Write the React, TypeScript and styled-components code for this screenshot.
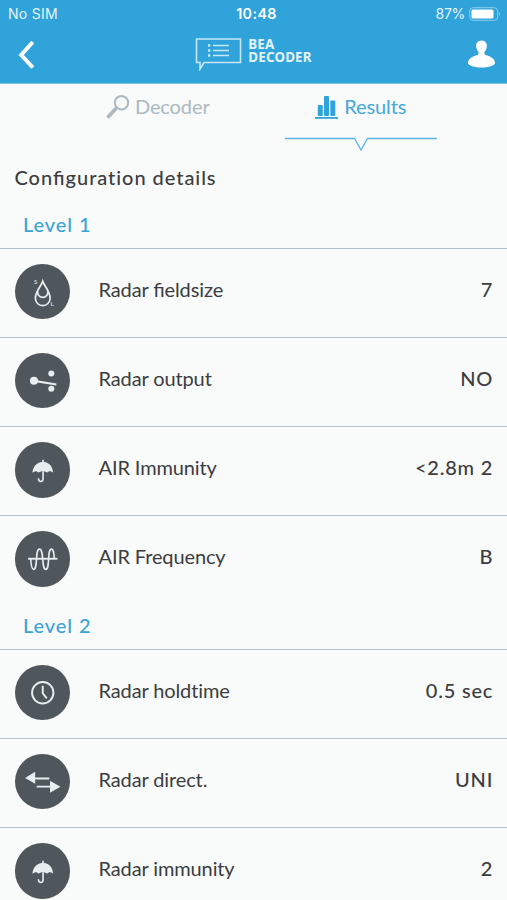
import React from 'react';
import styled, { createGlobalStyle } from 'styled-components';

const GlobalStyle = createGlobalStyle`
  * { box-sizing: border-box; }
  body { margin: 0; background: #f9fafa; overflow: hidden; }
`;

const BLUE = '#2fa3da';

const Screen = styled.main`
  width: 507px;
  height: 900px;
  overflow: hidden;
  background: #f9fafa;
  color: #3c3d3f;
  font-family: Lato, 'Liberation Sans', sans-serif;
  font-feature-settings: 'liga' 0;
`;

const Ligature = styled.span`
  font-feature-settings: 'liga' 1;
`;

const Header = styled.header`
  height: 84px;
  background: ${BLUE};
  color: #fff;
  border-bottom: 1px solid #7fc6e8;
`;

const StatusBar = styled.div`
  display: grid;
  grid-template-columns: 1fr auto 1fr;
  align-items: center;
  height: 28px;
  padding: 0 6px 0 8px;
  font: 400 14px/28px Inter, sans-serif;
  letter-spacing: 0.3px;
  color: #e4f4fc;
`;

const Clock = styled.span`
  font-weight: 600;
  font-size: 14.3px;
  letter-spacing: 0.4px;
  margin-left: 4px;
  color: #fff;
`;

const Battery = styled.span`
  display: flex;
  justify-content: flex-end;
  align-items: center;
  gap: 4px;
  letter-spacing: -0.3px;
`;

const NavBar = styled.div`
  display: grid;
  grid-template-columns: 1fr auto 1fr;
  height: 55px;
  padding: 0 11px 0 18px;
`;

const IconButton = styled.button<{ $end?: boolean }>`
  justify-self: ${(p) => (p.$end ? 'end' : 'start')};
  align-self: start;
  display: flex;
  margin-top: 11px;
  padding: 0;
  border: 0;
  background: none;
  color: inherit;
`;

const Brand = styled.div`
  display: flex;
  align-items: flex-start;
  gap: 6px;
  padding-top: 9px;
  margin-left: -7px;
`;

const BrandName = styled.div`
  display: flex;
  flex-direction: column;
  font: 700 13.4px/13.5px 'Noto Sans', sans-serif;
  letter-spacing: 0.15px;
  padding-top: 0.5px;
  color: #e4f4fc;
`;

const Tabs = styled.nav`
  display: grid;
  grid-template-columns: 1fr 1fr;
  height: 69px;
`;

const Tab = styled.div<{ $active?: boolean }>`
  display: flex;
  flex-direction: column;
  align-items: center;
  padding-left: ${(p) => (p.$active ? '0' : '62px')};
  padding-right: ${(p) => (p.$active ? '39px' : '0')};
  color: ${(p) => (p.$active ? '#43a8d9' : '#adb9c1')};
`;

const TabLabel = styled.div`
  display: flex;
  align-items: center;
  gap: 5px;
  height: 46px;
  font-size: 20px;
  line-height: 24px;
  letter-spacing: -0.1px;
`;

const TabText = styled.span`
  margin-top: -2px;
`;

const Title = styled.h1`
  height: 50.6px;
  margin: 0;
  padding-left: 14.5px;
  font-size: 20px;
  font-weight: 500;
  line-height: 48px;
  letter-spacing: 0.95px;
`;

const LevelTitle = styled.h2`
  height: 44px;
  margin: 0;
  padding-left: 23px;
  font-size: 20px;
  font-weight: 500;
  line-height: 41px;
  letter-spacing: 0.9px;
  color: #3ba4d7;
`;

const Row = styled.div`
  display: flex;
  align-items: flex-start;
  height: 89.25px;
  padding: 15px 13.8px 0 14.5px;
  border-top: 1px solid #b3c1ca;
`;

const Badge = styled.span`
  display: flex;
  flex: none;
  width: 55.5px;
  height: 55.5px;
  border-radius: 50%;
  background: #50575c;
  color: #e8edf0;
`;

const RowLabel = styled.span`
  flex: 1;
  padding-left: 28.5px;
  font-size: 20px;
  line-height: 50px;
  letter-spacing: -0.12px;
`;

const RowValue = styled.span`
  font-size: 20px;
  font-weight: 500;
  line-height: 50px;
  letter-spacing: 0.8px;
`;

type IconName = 'drop' | 'relay' | 'umbrella' | 'wave' | 'clock' | 'arrows';

const glyphs: Record<IconName, React.ReactNode> = {
  drop: (
    <>
      <g fill="none" stroke="currentColor" strokeWidth="1.7">
        <path d="M27.500 17C26 22 20.200 27 20.200 34a7.300 7.300 0 0 0 14.600 0C34.800 27 29 22 27.500 17Z" />
        <path d="M22.500 27a5.100 5.100 0 1 0 10 0" />
      </g>
      <g fill="currentColor" opacity=".8" fontFamily="Lato" fontSize="6" fontWeight="700">
        <text x="18.800" y="20">S</text>
        <text x="35.300" y="42">L</text>
      </g>
    </>
  ),
  relay: (
    <g fill="currentColor">
      <circle cx="18.800" cy="27.500" r="4" />
      <circle cx="36" cy="20.300" r="3" />
      <circle cx="36" cy="35.500" r="3" />
      <path d="M19 26.600 41 30.200v2L19 28.700Z" />
    </g>
  ),
  umbrella: (
    <>
      <path fill="currentColor" d="M27 17.500h1.600v2.200C34 20 37.500 24.500 37.800 30.500c-2-2-4.500-2-6 0-2-2-6.500-2-8.500 0-1.500-2-4-2-6 0 .3-6 4.200-10.500 9.700-10.800Z" />
      <path fill="none" stroke="currentColor" strokeWidth="1.600" d="M27.800 29v7.500c0 3.500-4.500 3.500-4.500 0V36" />
    </>
  ),
  wave: (
    <g fill="none" stroke="currentColor" strokeLinejoin="round">
      <path strokeWidth="1.900" d="M13 27.500h29" />
      <path strokeWidth="1.600" d="M15.500 27.500C16 35 17 38 18.400 38 23 38 19.500 18 24.300 18 29 18 26 38 30.500 38 35 38 31.500 18 36.200 18 38 18 38.500 21 39 27.500" />
    </g>
  ),
  clock: (
    <g fill="none" stroke="currentColor" strokeWidth="1.900">
      <circle cx="27.500" cy="27.500" r="10.600" />
      <path d="M27.500 20.500V28l4 5" />
    </g>
  ),
  arrows: (
    <>
      <path fill="currentColor" d="M10 23.700 20 17.500v12ZM45 32.500 34.700 26.500v12Z" />
      <path fill="none" stroke="currentColor" strokeWidth="1.800" d="M19 24.300h15M21.500 32.300H36" />
    </>
  ),
};

const levels: { title: string; rows: [IconName, string, string][] }[] = [
  {
    title: 'Level 1',
    rows: [
      ['drop', 'Radar fieldsize', '7'],
      ['relay', 'Radar output', 'NO'],
      ['umbrella', 'AIR Immunity', '<2.8m 2'],
      ['wave', 'AIR Frequency', 'B'],
    ],
  },
  {
    title: 'Level 2',
    rows: [
      ['clock', 'Radar holdtime', '0.5 sec'],
      ['arrows', 'Radar direct.', 'UNI'],
      ['umbrella', 'Radar immunity', '2'],
    ],
  },
];

/** Joins only the "fi" pair; other optional ligatures stay off. */
function withFi(text: string) {
  return text.split(/(fi)/).map((part, i) => (part === 'fi' ? <Ligature key={i}>fi</Ligature> : part));
}

export default function App() {
  return (
    <Screen>
      <GlobalStyle />
      <Header>
        <StatusBar>
          <span>No SIM</span>
          <Clock>10:48</Clock>
          <Battery>
            87%
            <svg width="32" height="15" viewBox="0 0 32 15">
              <rect x=".7" y=".7" width="28" height="12.600" rx="3.500" fill="none" stroke="#8ccdec" />
              <rect x="2.500" y="2.500" width="22" height="9" rx="1.500" fill="#fff" />
              <path d="M30 4.800q2 2.200 0 4.400Z" fill="#8ccdec" />
            </svg>
          </Battery>
        </StatusBar>
        <NavBar>
          <IconButton aria-label="Back">
            <svg width="18" height="32" viewBox="0 0 18 32" fill="none" stroke="currentColor" strokeWidth="4">
              <path d="M14.800 3 3.200 16 14.800 28.500" />
            </svg>
          </IconButton>
          <Brand>
            <svg width="47" height="34" viewBox="0 0 47 34" fill="none" stroke="#c8e8f7" strokeWidth="1.600">
              <path d="M1.500 2h44v23.500H9l-4 6.500v-6.500H1.500Z" />
              <path d="M18 8.500h16M18 13.500h16M18 18.500h16" />
              <path strokeWidth="2.300" d="M13 8.500h2.300M13 13.500h2.300M13 18.500h2.300" />
            </svg>
            <BrandName>
              <span>BEA</span>
              <span>DECODER</span>
            </BrandName>
          </Brand>
          <IconButton $end aria-label="Profile">
            <svg width="29" height="30" viewBox="0 0 29 30" fill="currentColor">
              <path d="M14.500 1.500c-4 0-5.800 3-5.300 6.500.3 2.500 1.500 4 2.300 5 .3 1.500 0 2.500-1 3C5 17.500 1 20 1 24c0 2.700 6.500 4.500 13.500 4.500S28 26.700 28 24c0-4-4-6.500-9.500-8-1-.5-1.300-1.500-1-3 .8-1 2-2.500 2.300-5 .5-3.500-1.300-6.500-5.300-6.500Z" />
            </svg>
          </IconButton>
        </NavBar>
      </Header>
      <Tabs>
        <Tab>
          <TabLabel>
            <svg width="24" height="24" viewBox="0 0 24 24" fill="none" stroke="currentColor">
              <circle cx="15.500" cy="7.800" r="6.700" strokeWidth="2" />
              <path d="M9 14.500 2.500 21.500" strokeWidth="3.700" strokeLinecap="round" />
              <path d="m9 14 2.500-2.500" strokeWidth="2" />
            </svg>
            <TabText>Decoder</TabText>
          </TabLabel>
        </Tab>
        <Tab $active>
          <TabLabel>
            <svg width="24" height="24" viewBox="0 0 24 24" fill={BLUE}>
              <rect x="2.800" y="10" width="5" height="11" rx="1" />
              <rect x="9" y="1" width="5" height="20" rx="1" />
              <rect x="15.300" y="5.500" width="5" height="15.500" rx="1" />
              <rect x="0" y="22" width="23" height="1.800" />
            </svg>
            <TabText>Results</TabText>
          </TabLabel>
          <svg width="152" height="22" viewBox="0 0 152 22" fill="none" stroke="#5db5df" strokeWidth="1.300">
            <path d="M0 8.500h69.500L76 20l6.500-11.500H152" />
          </svg>
        </Tab>
      </Tabs>
      <Title>{withFi('Configuration details')}</Title>
      {levels.map((level) => (
        <section key={level.title}>
          <LevelTitle>{level.title}</LevelTitle>
          {level.rows.map(([icon, label, value]) => (
            <Row key={label}>
              <Badge>
                <svg width="55.500" height="55.500" viewBox="0 0 55 55">{glyphs[icon]}</svg>
              </Badge>
              <RowLabel>{withFi(label)}</RowLabel>
              <RowValue>{value}</RowValue>
            </Row>
          ))}
        </section>
      ))}
    </Screen>
  );
}
